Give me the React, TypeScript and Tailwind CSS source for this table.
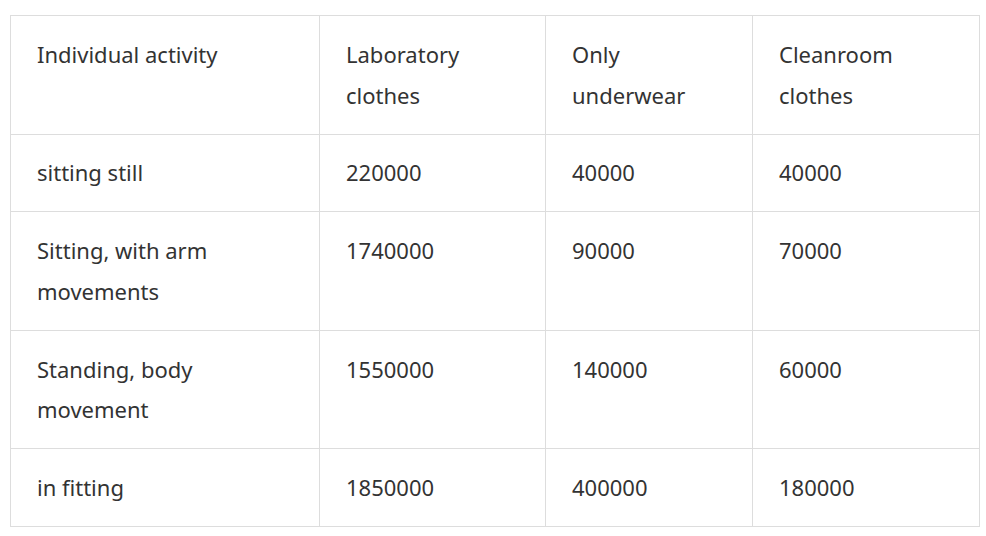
const rows = [
  ["Individual activity", "Laboratory clothes", "Only underwear", "Cleanroom clothes"],
  ["sitting still", "220000", "40000", "40000"],
  ["Sitting, with arm movements", "1740000", "90000", "70000"],
  ["Standing, body movement", "1550000", "140000", "60000"],
  ["in fitting", "1850000", "400000", "180000"],
];

export default function App() {
  return (
    <div className="bg-white min-h-screen pt-[15px] pl-[10px]">
      <table
        className="table-fixed border-collapse w-[969px] text-[22px] leading-[40.75px] text-[#333]"
        style={{ fontFamily: '"Noto Sans", "Open Sans", sans-serif' }}
      >
        <colgroup>
          <col className="w-[309px]" />
          <col className="w-[226px]" />
          <col className="w-[207px]" />
          <col className="w-[227px]" />
        </colgroup>
        <tbody>
          {rows.map((row, i) => (
            <tr key={i}>
              {row.map((cell, j) => (
                <td
                  key={j}
                  className="border border-[#dddddd] align-top pl-[26px] pr-[20px] pt-[17.75px] pb-[18.25px]"
                >
                  {cell}
                </td>
              ))}
            </tr>
          ))}
        </tbody>
      </table>
    </div>
  );
}
